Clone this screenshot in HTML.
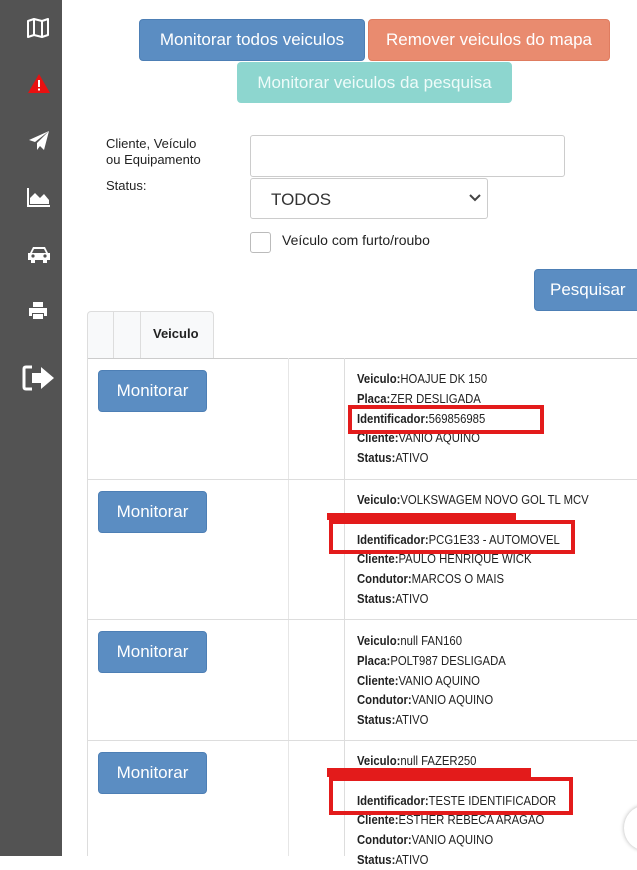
<!DOCTYPE html>
<html><head><meta charset="utf-8"><style>
*{box-sizing:border-box;margin:0;padding:0}
body{width:637px;height:856px;overflow:hidden;background:#fff;font-family:"Liberation Sans",Arial,sans-serif;color:#222;position:relative}
.a{position:absolute}
.sb{left:0;top:0;width:62px;height:856px;background:#535353}
.btn{position:absolute;color:#fff;border-radius:4px;font-size:17px;display:flex;align-items:center;justify-content:center;white-space:nowrap}
.blue{background:#5b8dc2;border:1px solid #4d7fb5}
.lbl{position:absolute;font-size:13px;color:#222}
.info{position:absolute;left:357px;font-size:13px;line-height:19.8px;color:#222;white-space:nowrap;transform:scaleX(0.87);transform-origin:0 0}
.info b{font-weight:bold}
.red{position:absolute;border:4px solid #e31b1b}
.bar{position:absolute;background:#e31b1b}
.hl{position:absolute;height:1px;background:#ddd}
.vl{position:absolute;width:1px;background:#ddd}
</style></head><body>
<div class="a sb"></div>
<svg class="a" style="left:26px;top:17px" width="24" height="22" viewBox="0 0 24 22"><path d="M2 4 L8 2 L16 4 L22 2 L22 18 L16 20 L8 18 L2 20 Z M8 2 V18 M16 4 V20" fill="none" stroke="#fff" stroke-width="2" stroke-linejoin="round"/></svg>
<svg class="a" style="left:28px;top:74px" width="22" height="19" viewBox="0 0 22 19"><path d="M11 0 L22 19 L0 19 Z" fill="#e81010"/><rect x="10" y="6" width="2" height="7" fill="#fff"/><rect x="10" y="14.5" width="2" height="2" fill="#fff"/></svg>
<svg class="a" style="left:28px;top:130px" width="22" height="22" viewBox="0 0 22 22"><path d="M21 1 L1 10 L7 12 Z M21 1 L9 13 L16 20 Z M9 13 L9 20 L12 16 Z" fill="#fff"/></svg>
<svg class="a" style="left:27px;top:187px" width="24" height="20" viewBox="0 0 24 20"><path d="M1 1 V19 H23" fill="none" stroke="#fff" stroke-width="2"/><path d="M3 17 L3 11 L8 6 L13 11 L17 7 L22 13 L22 17 Z" fill="#fff"/></svg>
<svg class="a" style="left:27px;top:245px" width="24" height="19" viewBox="0 0 24 19"><path d="M6 2 H18 L21 8 H23 V15 H20 V18 H16 V15 H8 V18 H4 V15 H1 V8 H3 Z" fill="#fff"/><path d="M7 4 H17 L19 8 H5 Z" fill="#535353"/><circle cx="6" cy="11" r="1.6" fill="#535353"/><circle cx="18" cy="11" r="1.6" fill="#535353"/></svg>
<svg class="a" style="left:28px;top:301px" width="20" height="19" viewBox="0 0 20 19"><path d="M5 1 H15 V6 H5 Z M1 7 H19 V15 H16 V12 H4 V15 H1 Z M5 13 H15 V18 H5 Z" fill="#fff"/></svg>
<svg class="a" style="left:21px;top:364px" width="36" height="28" viewBox="0 0 36 28"><path d="M11 3 H5 Q3 3 3 5 V23 Q3 25 5 25 H11" fill="none" stroke="#fff" stroke-width="3"/><path d="M11 9 H20 V3 L33 14 L20 25 V19 H11 Z" fill="#fff"/></svg>

<div class="btn blue" style="left:139px;top:19px;width:226px;height:42px">Monitorar todos veiculos</div>
<div class="btn" style="left:368px;top:19px;width:242px;height:42px;background:#e98b6f;border:1px solid #df7c60">Remover veiculos do mapa</div>
<div class="btn" style="left:237px;top:62px;width:275px;height:41px;background:#8dd6cf;color:#eefbf9">Monitorar veiculos da pesquisa</div>

<div class="lbl" style="left:106px;top:136px;line-height:16px">Cliente, Veículo<br>ou Equipamento</div>
<div class="lbl" style="left:106px;top:178px">Status:</div>
<div class="a" style="left:250px;top:135px;width:315px;height:42px;border:1px solid #ccc;border-radius:3px"></div>
<div class="a" style="left:250px;top:178px;width:238px;height:41px;border:1px solid #ccc;border-radius:3px;font-size:17px;color:#333;padding:11px 0 0 20px">TODOS</div>
<svg class="a" style="left:469px;top:194px" width="12" height="8" viewBox="0 0 12 8"><path d="M1 1 L6 6 L11 1" fill="none" stroke="#444" stroke-width="2"/></svg>
<div class="a" style="left:250px;top:232px;width:21px;height:21px;border:1px solid #bbb;border-radius:3px"></div>
<div class="lbl" style="left:282px;top:232px;font-size:14px">Veículo com furto/roubo</div>
<div class="btn blue" style="left:534px;top:269px;width:110px;height:42px;justify-content:flex-start;padding-left:15px">Pesquisar</div>

<div class="a" style="left:87px;top:311px;width:127px;height:47px;background:#f8f9fa;border:1px solid #ddd;border-bottom:none;border-radius:4px 4px 0 0"></div>
<div class="vl" style="left:113px;top:312px;height:46px"></div>
<div class="vl" style="left:140px;top:312px;height:46px"></div>
<div class="a" style="left:153px;top:326px;font-size:13px;font-weight:bold">Veiculo</div>
<div class="hl" style="left:87px;top:358px;width:550px;background:#ccc"></div>
<div class="vl" style="left:87px;top:358px;height:498px"></div>
<div class="vl" style="left:288px;top:358px;height:498px;background:#e6e6e6"></div>
<div class="vl" style="left:344px;top:358px;height:498px"></div>
<div class="hl" style="left:87px;top:479px;width:550px"></div>
<div class="hl" style="left:87px;top:619px;width:550px"></div>
<div class="hl" style="left:87px;top:740px;width:550px"></div>

<div class="btn blue" style="left:98px;top:370px;width:109px;height:42px">Monitorar</div>
<div class="btn blue" style="left:98px;top:491px;width:109px;height:42px">Monitorar</div>
<div class="btn blue" style="left:98px;top:631px;width:109px;height:42px">Monitorar</div>
<div class="btn blue" style="left:98px;top:752px;width:109px;height:42px">Monitorar</div>

<div class="info" style="top:369px"><b>Veiculo:</b>HOAJUE DK 150<br><b>Placa:</b>ZER DESLIGADA<br><b>Identificador:</b>569856985<br><b>Cliente:</b>VANIO AQUINO<br><b>Status:</b>ATIVO</div>
<div class="red" style="left:348px;top:405px;width:196px;height:29px"></div>

<div class="info" style="top:490px"><b>Veiculo:</b>VOLKSWAGEM NOVO GOL TL MCV<br>&nbsp;<br><b>Identificador:</b>PCG1E33 - AUTOMOVEL<br><b>Cliente:</b>PAULO HENRIQUE WICK<br><b>Condutor:</b>MARCOS O MAIS<br><b>Status:</b>ATIVO</div>
<div class="bar" style="left:327px;top:513px;width:189px;height:7px"></div>
<div class="red" style="left:329px;top:520px;width:246px;height:34px"></div>

<div class="info" style="top:631px"><b>Veiculo:</b>null FAN160<br><b>Placa:</b>POLT987 DESLIGADA<br><b>Cliente:</b>VANIO AQUINO<br><b>Condutor:</b>VANIO AQUINO<br><b>Status:</b>ATIVO</div>

<div class="info" style="top:751px"><b>Veiculo:</b>null FAZER250<br>&nbsp;<br><b>Identificador:</b>TESTE IDENTIFICADOR<br><b>Cliente:</b>ESTHER REBECA ARAGAO<br><b>Condutor:</b>VANIO AQUINO<br><b>Status:</b>ATIVO</div>
<div class="bar" style="left:327px;top:768px;width:204px;height:9px"></div>
<div class="red" style="left:329px;top:777px;width:244px;height:38px"></div>

<div class="a" style="left:624px;top:806px;width:40px;height:44px;border-radius:50%;background:#fff;box-shadow:0 0 4px rgba(0,0,0,.3)"></div>
</body></html>
